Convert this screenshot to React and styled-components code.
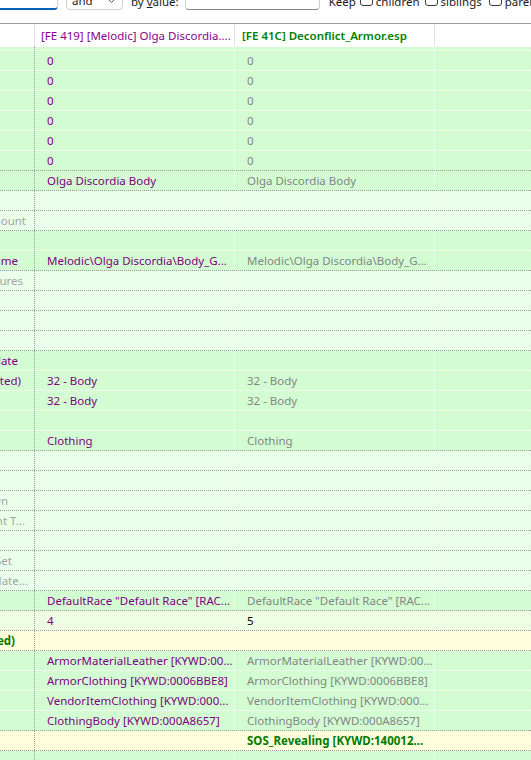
import React from 'react';
import styled, { createGlobalStyle } from 'styled-components';

const GlobalStyle = createGlobalStyle`
   html, body {
      margin: 0;
      padding: 0;
      background: #ffffff;
   }
   body {
      font-family: 'Noto Sans', 'Open Sans', sans-serif;
      font-size: 11.5px;
      color: #1a1a1a;
      overflow: hidden;
   }
`;

const BG = {
   dark: '#d3fcd3',
   light: '#e9ffe9',
   pale: '#effde2',
   yellow: '#ffffdd',
};

const TEXT = {
   purple: '#800080',
   gray: '#858585',
   faded: '#a4a4a4',
   black: '#000000',
   green: '#007a00',
};

const Window = styled.div`
   width: 531px;
   height: 760px;
   overflow: hidden;
   display: flex;
   flex-direction: column;
`;

const Toolbar = styled.div`
   height: 23px;
   flex: none;
   overflow: hidden;
   border-bottom: 1px solid #9c9c9c;
   background: #ffffff;
`;

const ToolbarRow = styled.div`
   height: 22px;
   margin-top: -12px;
   display: flex;
   align-items: center;
   & > * {
      flex: none;
   }
`;

const SearchBox = styled.div`
   width: 64px;
   height: 22px;
   margin-left: -6px;
   box-sizing: border-box;
   background: #fff;
   border: 1px solid #d0d0d0;
   border-bottom: 2px solid #005fb8;
   border-radius: 4px;
`;

const Select = styled.div`
   width: 57px;
   height: 21px;
   margin-left: 8px;
   box-sizing: border-box;
   border: 1px solid #cfcfcf;
   border-radius: 4px;
   display: flex;
   align-items: center;
   justify-content: space-between;
   padding: 3px 6px 0 5px;
   color: #1a1a1a;
`;

const Label = styled.span`
   margin-left: ${(p) => p.$gap || 0}px;
   padding-top: 5px;
   white-space: nowrap;
   color: #1a1a1a;
   u {
      text-decoration: underline;
      text-underline-offset: 1px;
   }
`;

const ValueBox = styled.div`
   width: 135px;
   height: 22px;
   margin-left: 6px;
   box-sizing: border-box;
   border: 1px solid #cfcfcf;
   border-bottom-color: #8a8a8a;
   border-radius: 4px;
   background: #fff;
`;

const Check = styled.span`
   width: 13px;
   height: 13px;
   box-sizing: border-box;
   margin-left: ${(p) => p.$gap}px;
   border: 1px solid #3a3a3a;
   border-radius: 3px;
   background: #fff;
`;

const Grid = styled.div`
   display: grid;
   grid-template-columns: 35px 200px 200px 1fr;
`;

const HeaderRow = styled(Grid)`
   height: 23px;
   flex: none;
   background: #ffffff;
`;

const HeaderCell = styled.div`
   box-sizing: border-box;
   border-right: 1px solid #e3e3e3;
   padding-left: ${(p) => p.$pad || 0}px;
   display: flex;
   align-items: center;
   white-space: nowrap;
   overflow: hidden;
   color: ${(p) => p.$color || TEXT.black};
   font-weight: ${(p) => (p.$bold ? 600 : 400)};
   &:last-child {
      border-right: none;
   }
`;

const Body = styled.div`
   flex: 1;
   overflow: hidden;
`;

const Rows = styled.div`
   margin-top: -16px;
`;

const Row = styled(Grid)`
   height: 20px;
   box-sizing: border-box;
   background: ${(p) => BG[p.$bg]};
   border-bottom: 1px dotted ${(p) => (p.$sep === 'white' ? '#ffffff' : '#9a9a9a')};
`;

const Cell = styled.div`
   box-sizing: border-box;
   border-right: 1px dotted ${(p) => (p.$first ? '#9a9a9a' : '#ffffff')};
   padding-left: ${(p) => (p.$first ? 0 : 12)}px;
   padding-right: 6px;
   display: flex;
   align-items: center;
   white-space: nowrap;
   overflow: hidden;
   color: ${(p) => TEXT[p.$color] || TEXT.purple};
   font-weight: ${(p) => (p.$bold ? 700 : 400)};
   &:last-child {
      border-right: none;
   }
`;

const TreeLabel = styled(Cell)`
   justify-content: flex-end;
   padding-right: ${(p) => 35 - p.$end}px;
`;

const Chevron = () => (
   <svg width="9" height="6" viewBox="0 0 9 6">
      <path d="M1 1l3.5 3.5L8 1" fill="none" stroke="#555" strokeWidth="1" />
   </svg>
);

// bg, separator under the row, tree label [text, colour, right end], col1, col2, col2 colour
const rows = [
   { bg: 'dark', sep: 'white' },
   { bg: 'dark', sep: 'white', a: '0', b: '0' },
   { bg: 'dark', sep: 'white', a: '0', b: '0' },
   { bg: 'dark', sep: 'white', a: '0', b: '0' },
   { bg: 'dark', sep: 'white', a: '0', b: '0' },
   { bg: 'dark', sep: 'white', a: '0', b: '0' },
   { bg: 'dark', sep: 'gray', a: '0', b: '0' },
   { bg: 'dark', sep: 'gray', a: 'Olga Discordia Body', b: 'Olga Discordia Body' },
   { bg: 'light', sep: 'gray' },
   { bg: 'light', sep: 'gray', label: ['EAMT - Enchantment Amount', 'faded', 27] },
   { bg: 'dark', sep: 'white' },
   {
      bg: 'dark',
      sep: 'gray',
      label: ['MOD2 - Model FileName', 'purple', 19],
      a: 'Melodic\\Olga Discordia\\Body_G...',
      b: 'Melodic\\Olga Discordia\\Body_G...',
   },
   { bg: 'light', sep: 'gray', label: ['MO2S - Alternate Textures', 'faded', 24] },
   { bg: 'light', sep: 'gray' },
   { bg: 'light', sep: 'gray' },
   { bg: 'light', sep: 'gray' },
   { bg: 'dark', sep: 'white', label: ['BOD2 - Biped Body Template', 'purple', 19] },
   {
      bg: 'dark',
      sep: 'white',
      label: ['First Person Flags (sorted)', 'purple', 22],
      a: '32 - Body',
      b: '32 - Body',
   },
   { bg: 'dark', sep: 'white', a: '32 - Body', b: '32 - Body' },
   { bg: 'dark', sep: 'white' },
   { bg: 'dark', sep: 'gray', a: 'Clothing', b: 'Clothing' },
   { bg: 'light', sep: 'gray' },
   { bg: 'light', sep: 'gray' },
   { bg: 'light', sep: 'gray', label: ['ZNAM - Sound - Put Down', 'faded', 9] },
   { bg: 'light', sep: 'gray', label: ['ETYP - Equipment T...', 'faded', 26] },
   { bg: 'light', sep: 'gray' },
   { bg: 'light', sep: 'gray', label: ['BIDS - Bash Impact Data Set', 'faded', 13] },
   { bg: 'light', sep: 'gray', label: ['BAMT - Alternate Block Mate...', 'faded', 29] },
   {
      bg: 'dark',
      sep: 'gray',
      a: 'DefaultRace "Default Race" [RAC...',
      b: 'DefaultRace "Default Race" [RAC...',
   },
   { bg: 'pale', sep: 'gray', a: '4', b: '5', bColor: 'black' },
   { bg: 'yellow', sep: 'gray', label: ['KWDA - Keywords (sorted)', 'green', 16], bold: true },
   {
      bg: 'dark',
      sep: 'white',
      a: 'ArmorMaterialLeather [KYWD:00...',
      b: 'ArmorMaterialLeather [KYWD:00...',
   },
   {
      bg: 'dark',
      sep: 'white',
      a: 'ArmorClothing [KYWD:0006BBE8]',
      b: 'ArmorClothing [KYWD:0006BBE8]',
   },
   {
      bg: 'dark',
      sep: 'white',
      a: 'VendorItemClothing [KYWD:000...',
      b: 'VendorItemClothing [KYWD:000...',
   },
   {
      bg: 'dark',
      sep: 'gray',
      a: 'ClothingBody [KYWD:000A8657]',
      b: 'ClothingBody [KYWD:000A8657]',
   },
   { bg: 'yellow', sep: 'gray', b: 'SOS_Revealing [KYWD:140012...', bColor: 'green', bBold: true },
   { bg: 'dark', sep: 'white' },
];

const App = () => {
   return (
      <>
         <GlobalStyle />
         <Window>
            <Toolbar>
               <ToolbarRow>
                  <SearchBox />
                  <Select>
                     <span>and</span>
                     <Chevron />
                  </Select>
                  <Label $gap={8}>
                     by <u>v</u>alue:
                  </Label>
                  <ValueBox />
                  <Label $gap={9}>Keep</Label>
                  <Check $gap={4} />
                  <Label $gap={3}>children</Label>
                  <Check $gap={5} />
                  <Label $gap={3}>siblings</Label>
                  <Check $gap={7} />
                  <Label $gap={3}>parents</Label>
               </ToolbarRow>
            </Toolbar>
            <HeaderRow>
               <HeaderCell />
               <HeaderCell $pad={6} $color="#8b008b">
                  [FE 419] [Melodic] Olga Discordia....
               </HeaderCell>
               <HeaderCell $pad={7} $color="#008000" $bold>
                  [FE 41C] Deconflict_Armor.esp
               </HeaderCell>
               <HeaderCell />
            </HeaderRow>
            <Body>
               <Rows>
                  {rows.map((r, i) => (
                     <Row key={i} $bg={r.bg} $sep={r.sep}>
                        {r.label ? (
                           <TreeLabel $first $end={r.label[2]} $color={r.label[1]} $bold={r.bold}>
                              {r.label[0]}
                           </TreeLabel>
                        ) : (
                           <Cell $first />
                        )}
                        <Cell>{r.a}</Cell>
                        <Cell $color={r.bColor || 'gray'} $bold={r.bBold}>
                           {r.b}
                        </Cell>
                        <Cell />
                     </Row>
                  ))}
               </Rows>
            </Body>
         </Window>
      </>
   );
};

export default App;
